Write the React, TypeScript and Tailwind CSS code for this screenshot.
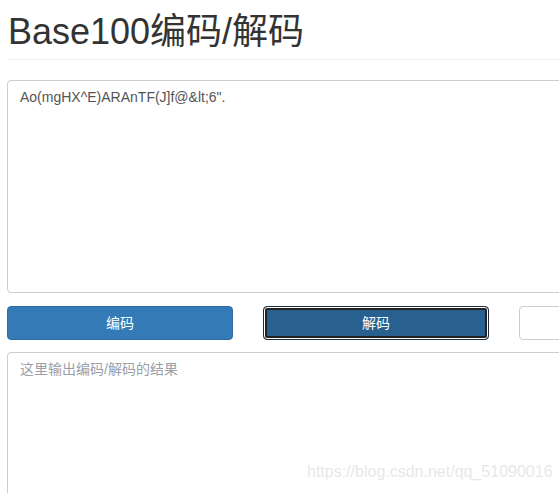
import React from 'react'

const font = '"Liberation Sans", Arial, "Noto Sans CJK SC", sans-serif'

export default function App() {
  return (
    <div
      className="relative w-[559px] h-[493px] overflow-hidden bg-white text-[#333]"
      style={{ fontFamily: font }}
    >
      <div className="w-[745px] pl-[7px] flex flex-col">
        {/* Titulo */}
        <h1 className="mt-[12px] h-[40px] pl-px text-[36px] leading-[40px] font-normal text-[#333]">
          Base100编码/解码
        </h1>
        <hr className="mt-[7px] border-0 border-t border-[#eee]" />

        {/* Entrada */}
        <textarea
          className="mt-[20px] h-[213px] w-full rounded border border-[#d3ccc4] px-3 py-1.5 text-[14px] leading-5 text-[#555] outline-none resize-none"
          defaultValue={'Ao(mgHX^E)ARAnTF(J]f@&lt;6".'}
        />

        {/* Botoes */}
        <div className="mt-[13px] grid grid-cols-3 gap-[30px]">
          <button className="h-[34px] rounded border border-[#2e6da4] bg-[#337ab7] text-[14px] text-white">
            编码
          </button>
          <button className="h-[34px] rounded border border-[#1c2a3a] bg-[#286090] text-[14px] text-white shadow-[inset_0_0_0_1px_#fff,inset_0_0_0_3px_#222]">
            解码
          </button>
          <button className="h-[34px] rounded border border-[#d3ccc4] bg-white text-[14px] text-[#333]" />
        </div>

        {/* Saida */}
        <textarea
          className="mt-[12px] h-[213px] w-full rounded border border-[#d3ccc4] px-3 py-1.5 text-[14px] leading-5 text-[#555] outline-none resize-none placeholder:text-[#99a0aa]"
          placeholder="这里输出编码/解码的结果"
        />
      </div>

      <span className="absolute left-[307px] top-[460px] text-[16px] text-[#e8e8e8]">
        https://blog.csdn.net/qq_51090016
      </span>
    </div>
  )
}
